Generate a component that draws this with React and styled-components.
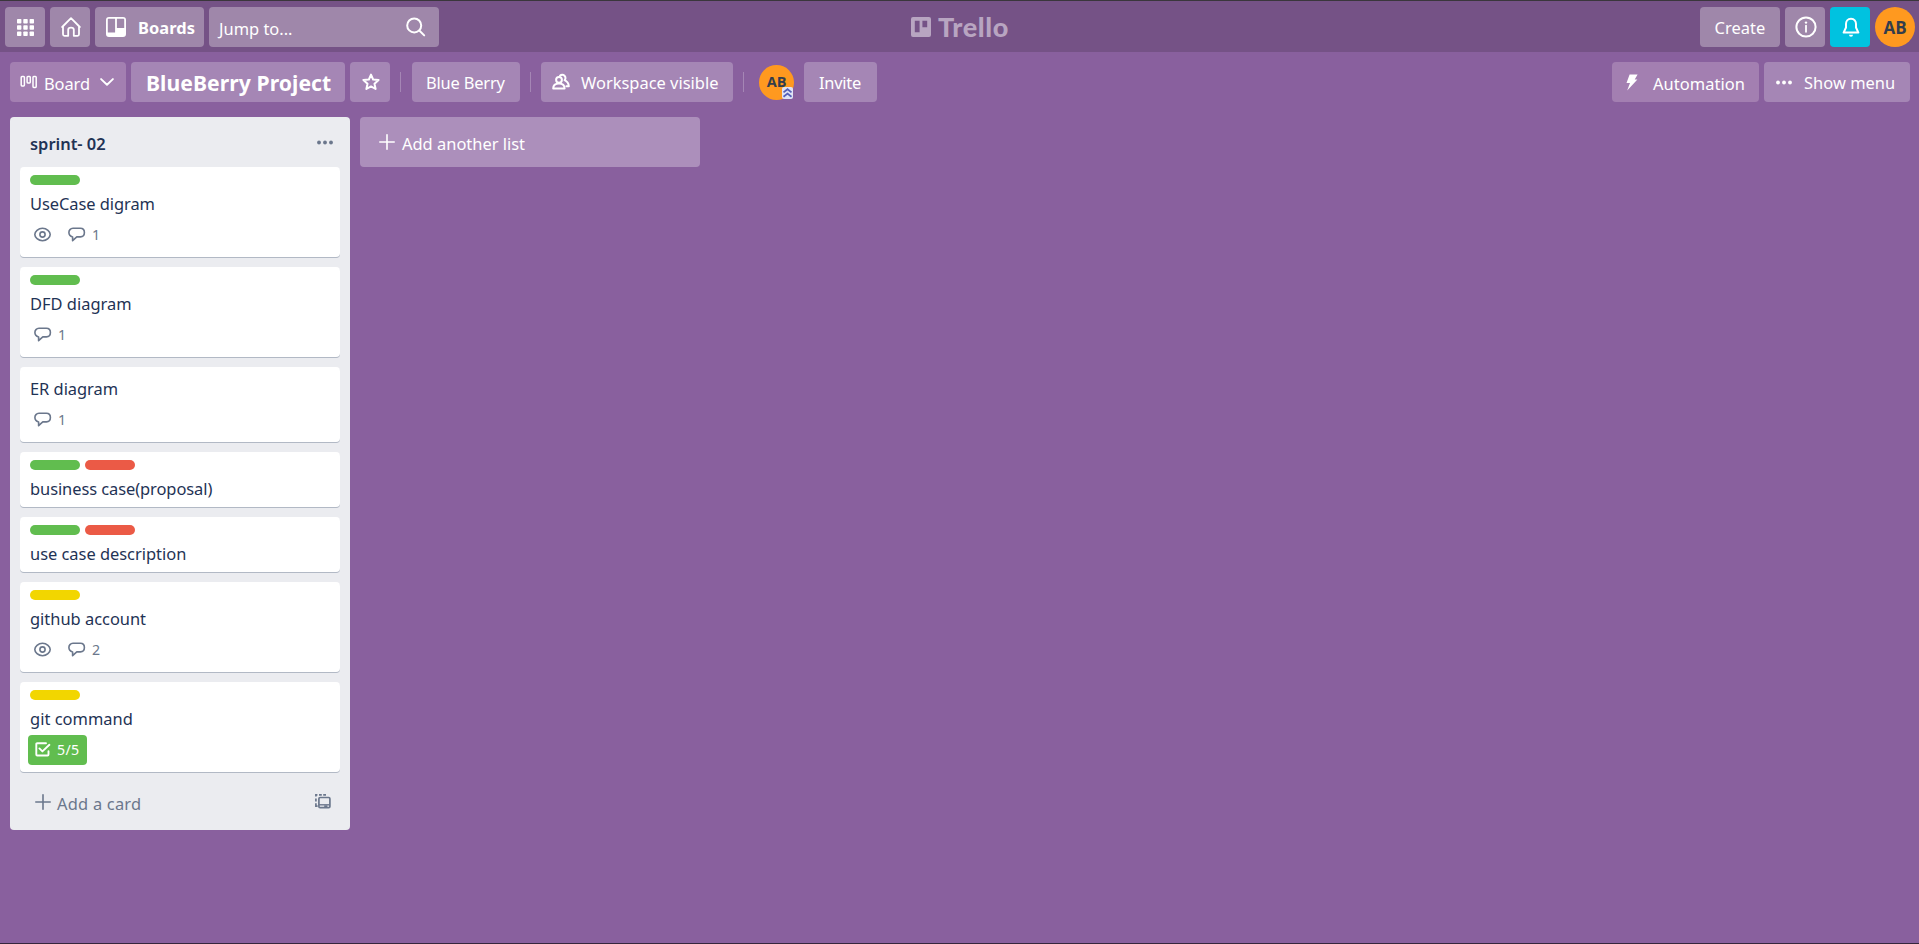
import React from 'react';
import styled, { createGlobalStyle } from 'styled-components';

const Global = createGlobalStyle`
  * { box-sizing: border-box; }
  html, body { margin: 0; padding: 0; }
  body {
    background: #89609e;
    color: #1f3355;
    font-family: "Noto Sans", "Open Sans", sans-serif;
    font-size: 16.45px;
    line-height: 25px;
    overflow: hidden;
  }
  svg { display: block; flex: none; }
`;

const Page = styled.div`
  display: flex;
  flex-direction: column;
  width: 100%;
  height: 944px;
  background: #89609e;
  border-top: 1px solid #3a363c;
  border-bottom: 1px solid #35263c;
`;

const TopBar = styled.header`
  display: flex;
  justify-content: space-between;
  height: 51px;
  flex: none;
  padding: 6px 4px 5px 5px;
  background: #755286;
  color: #fff;
`;

const Group = styled.div`
  display: flex;
  flex: 1 1 0;
  gap: 5px;
  justify-content: ${(p) => (p.$end ? 'flex-end' : 'flex-start')};
`;

const TopButton = styled.div`
  display: flex;
  align-items: center;
  justify-content: ${(p) => (p.$start ? 'flex-start' : 'center')};
  width: ${(p) => p.$w || 40}px;
  height: 40px;
  padding-left: ${(p) => p.$pad || 0}px;
  gap: ${(p) => p.$gap || 0}px;
  border-radius: 4px;
  background: ${(p) => p.$bg || '#9f87aa'};
`;

const Label = styled.span`
  display: block;
  white-space: nowrap;
  padding-top: ${(p) => p.$drop || 0}px;
  font-weight: ${(p) => p.$weight || 400};
  letter-spacing: ${(p) => p.$ls || 0}px;
`;

const SearchBox = styled.div`
  display: flex;
  align-items: center;
  justify-content: space-between;
  width: 230px;
  height: 40px;
  padding: 0 13px 0 10px;
  border-radius: 4px;
  background: #9f87aa;
`;

const Brand = styled.div`
  display: flex;
  align-items: center;
  gap: 7px;
  height: 40px;
  color: #b8a5c1;
`;

const BrandName = styled.span`
  font-family: Lato, "Noto Sans", sans-serif;
  font-size: 27px;
  font-weight: 900;
  letter-spacing: 0.6px;
  line-height: 30px;
  padding-bottom: 1px;
`;

const Avatar = styled.div`
  display: flex;
  align-items: center;
  justify-content: center;
  position: relative;
  width: ${(p) => p.$size}px;
  height: ${(p) => p.$size}px;
  border-radius: 50%;
  background: #ff991f;
  color: #333d4c;
  font-family: "Open Sans", sans-serif;
  font-weight: 700;
  font-size: ${(p) => p.$font}px;
  line-height: 1;
`;

const AdminMark = styled.svg`
  position: absolute;
  right: 1px;
  bottom: 1px;
`;

const BoardBar = styled.div`
  display: flex;
  align-items: center;
  height: 60px;
  flex: none;
  padding: 0 9px 0 10px;
  color: #fff;
`;

const BoardButton = styled.div`
  display: flex;
  align-items: center;
  width: ${(p) => p.$w}px;
  height: 40px;
  padding-left: ${(p) => p.$pad}px;
  gap: ${(p) => p.$gap || 0}px;
  margin-right: ${(p) => (p.$mr === undefined ? 5 : p.$mr)}px;
  border-radius: 4px;
  background: ${(p) => (p.$plain ? '#a37fb1' : '#a586b5')};
`;

const BoardName = styled.h1`
  margin: 0;
  padding-top: 1px;
  font-size: 21.15px;
  line-height: 30px;
  font-weight: 700;
  letter-spacing: 0.06px;
  white-space: nowrap;
`;

const Divider = styled.span`
  width: 1px;
  height: 20px;
  margin-right: ${(p) => p.$mr}px;
  background: #a586b5;
`;

const Spacer = styled.div`
  flex: ${(p) => (p.$w ? `0 0 ${p.$w}px` : '1')};
`;

const Canvas = styled.main`
  display: flex;
  align-items: flex-start;
  gap: 10px;
  padding: 5px 10px;
`;

const List = styled.section`
  width: 340px;
  height: 713px;
  border-radius: 4px;
  background: #ebecf0;
`;

const ListHeader = styled.div`
  display: flex;
  align-items: center;
  justify-content: space-between;
  height: 50px;
  padding: 0 17px 0 20px;
`;

const Cards = styled.div`
  display: flex;
  flex-direction: column;
  gap: 10px;
  padding: 0 10px;
`;

const CardBox = styled.article`
  padding: 8px 10px 7px;
  border-radius: 4px;
  background: #fff;
  box-shadow: 0 1px 0 rgba(9, 30, 66, 0.25);
`;

const Labels = styled.div`
  display: flex;
  gap: 5px;
  padding-bottom: 5px;
`;

const Tag = styled.span`
  width: 50px;
  height: 10px;
  border-radius: 5px;
  background: ${(p) => p.$color};
`;

const CardTitle = styled.div`
  height: 25px;
  white-space: nowrap;
  line-height: 27px;
  letter-spacing: ${(p) => p.$ls}px;
`;

const Badges = styled.div`
  display: flex;
  height: 30px;
  margin-top: 5px;
  color: #6b778c;
`;

const Badge = styled.div`
  display: flex;
  align-items: center;
  gap: 6px;
  height: 30px;
  padding: 0 4px 2px 4px;
  margin-right: 9px;
  font-size: 14.2px;
`;

const DoneBadge = styled(Badge)`
  width: 59px;
  margin-left: -2px;
  padding: 0 7px 1px;
  border-radius: 4px;
  background: #61bd4f;
  color: #fff;
  letter-spacing: 0.3px;
`;

const AddCard = styled.div`
  display: flex;
  align-items: center;
  height: 58px;
  padding: 1px 19px 0 25px;
  color: #6b778c;
`;

const AddList = styled.div`
  display: flex;
  align-items: center;
  width: 340px;
  height: 50px;
  padding-left: 19px;
  gap: 7px;
  border-radius: 4px;
  background: #ac8fbb;
  color: #fff;
`;

const Grid = () => (
  <svg width="17" height="17" viewBox="0 0 17 17" fill="#fff">
    {[0, 6.3, 12.6].map((y) => [0, 6.3, 12.6].map((x) => (
      <rect key={`${x}-${y}`} x={x} y={y} width="4.4" height="4.4" rx="0.7" />
    )))}
  </svg>
);

const Home = () => (
  <svg width="20" height="20" viewBox="0 0 20 20" fill="none" stroke="#fff" strokeWidth="1.8" strokeLinejoin="round" strokeLinecap="round">
    <path d="M1.2 10 10 1.2 18.8 10M2 9.3V17.3Q2 18.8 3.5 18.8H7.2V12.7Q7.2 10.6 10 10.6T12.8 12.7V18.8H16.5Q18 18.8 18 17.3V9.3" />
  </svg>
);

const BoardsIcon = () => (
  <svg width="20" height="20" viewBox="0 0 20 20" fill="#fff">
    <path fillRule="evenodd" d="M3 0H17Q20 0 20 3V17Q20 20 17 20H3Q0 20 0 17V3Q0 0 3 0ZM2.4 1.8Q1.8 1.8 1.8 2.4V15.4H9.1V1.8ZM10.9 1.8V11H18.2V2.4Q18.2 1.8 17.6 1.8Z" />
  </svg>
);

const Search = () => (
  <svg width="20" height="20" viewBox="0 0 20 20" fill="none" stroke="#fff" strokeWidth="2" strokeLinecap="round">
    <circle cx="8.2" cy="8.4" r="7" />
    <path d="M13.3 13.5 18.2 18.4" />
  </svg>
);

const BrandIcon = () => (
  <svg width="20" height="20" viewBox="0 0 20 20" fill="currentColor">
    <path fillRule="evenodd" d="M2 0H18Q20 0 20 2V18Q20 20 18 20H2Q0 20 0 18V2Q0 0 2 0ZM3.8 3.8V15.2H8.6V3.8ZM11.4 3.8V10.2H16.2V3.8Z" />
  </svg>
);

const Info = () => (
  <svg width="22" height="22" viewBox="0 0 22 22" fill="none" stroke="#fff">
    <circle cx="11" cy="11" r="9.6" strokeWidth="2" />
    <path d="M11 9.6V15.8" strokeWidth="1.8" strokeLinecap="round" />
    <circle cx="11" cy="6.6" r="1.2" fill="#fff" stroke="none" />
  </svg>
);

const Bell = () => (
  <svg width="18" height="21" viewBox="0 0 18 21" fill="none" stroke="#fff" strokeWidth="2" strokeLinejoin="round" strokeLinecap="round">
    <path d="M9 1.8C5.7 1.8 4 4.2 4 7V10.5L1.6 15.6H16.4L14 10.5V7C14 4.2 12.3 1.8 9 1.8Z" />
    <path d="M7 17.8A2 2 0 0 0 11 17.8Z" fill="#fff" stroke="none" />
  </svg>
);

const BoardView = () => (
  <svg width="18" height="14" viewBox="0 0 18 14" fill="none" stroke="#fff" strokeWidth="1.5">
    <rect x="1.2" y="1.5" width="3.2" height="9.4" rx="0.8" />
    <rect x="7.1" y="1.5" width="3.2" height="6.4" rx="0.8" />
    <rect x="13" y="1.5" width="3.2" height="10.9" rx="0.8" />
  </svg>
);

const Chevron = () => (
  <svg width="14" height="8" viewBox="0 0 14 8" fill="none" stroke="#fff" strokeWidth="1.9" strokeLinecap="round" strokeLinejoin="round">
    <path d="M1.1 1.1 7 6.8 12.9 1.1" />
  </svg>
);

const Star = () => (
  <svg width="18" height="18" viewBox="0 0 18 18" fill="none" stroke="#fff" strokeWidth="2" strokeLinejoin="round">
    <path d="M9 1.6 11.1 6.5 16.6 7 12.5 10.7 13.6 16 9 13.4 4.4 16 5.5 10.7 1.4 7 6.9 6.5Z" />
  </svg>
);

const People = () => (
  <svg width="18" height="18" viewBox="0 0 18 18" fill="none" stroke="#fff" strokeWidth="2" strokeLinecap="round" strokeLinejoin="round">
    <circle cx="7" cy="6.8" r="2.9" />
    <path d="M1.2 15.6C1.2 12 3.6 10.6 7 10.6S12.6 12 12.6 15.6Z" />
    <path d="M8 2.8A3 3 0 1 1 12.6 7.2C15.2 8.4 16.6 10.4 16.8 13.2H14.4" />
  </svg>
);

const Bolt = () => (
  <svg width="12" height="17" viewBox="0 0 12 17" fill="#fff">
    <path d="M3.6 0.4H11.6L8.7 5.5H11.4L1.2 16.4 4 8.9H0.5Z" />
  </svg>
);

const Dots = ({ color }) => (
  <svg width="16" height="5" viewBox="0 0 16 5" fill={color}>
    <circle cx="2" cy="2.5" r="1.9" />
    <circle cx="8" cy="2.5" r="1.9" />
    <circle cx="14" cy="2.5" r="1.9" />
  </svg>
);

const Plus = ({ color }) => (
  <svg width="16" height="16" viewBox="0 0 16 16" fill="none" stroke={color} strokeWidth="1.6" strokeLinecap="round">
    <path d="M8 0.8V15.2M0.8 8H15.2" />
  </svg>
);

const Eye = () => (
  <svg width="17" height="15" viewBox="0 0 17 15" fill="none" stroke="currentColor" strokeWidth="1.6">
    <path d="M8.5 1.3C12.8 1.3 16.2 4.6 16.2 7.5S12.8 13.7 8.5 13.7.8 10.4.8 7.5 4.2 1.3 8.5 1.3Z" />
    <circle cx="8.5" cy="7.5" r="2.6" />
  </svg>
);

const Comment = () => (
  <svg width="18" height="15" viewBox="0 0 18 15" fill="none" stroke="currentColor" strokeWidth="1.6" strokeLinejoin="round">
    <path d="M5 1.3H12.4C15 1.3 16.4 3.2 16.4 5.6S15 9.9 12.4 9.9H8.8L4.6 13.7V10C2.2 9.4 0.9 7.8 0.9 5.6S2.4 1.3 5 1.3Z" />
  </svg>
);

const Check = () => (
  <svg width="16" height="15" viewBox="0 0 16 15" fill="none" stroke="#fff" strokeWidth="1.9" strokeLinecap="round" strokeLinejoin="round">
    <path d="M11 1.2H2.2Q1.3 1.2 1.3 2.1V12.6Q1.3 13.5 2.2 13.5H12.6Q13.5 13.5 13.5 12.6V9.2" />
    <path d="M4.4 6.4 7.4 9.4 14.4 2.8" />
  </svg>
);

const Template = () => (
  <svg width="16" height="15" viewBox="0 0 16 15" fill="none" stroke="currentColor" strokeWidth="1.7">
    <rect x="3.9" y="3.5" width="11" height="10.2" rx="1.2" />
    <path d="M3.9 10.8H14.9" strokeWidth="1.4" />
    <path d="M9.2 12.2H12.4" strokeWidth="1.8" />
    <path d="M2.4 0.9H0.9V2.6M0.9 4.4V7.4M0.9 9.2V12.2H2.6M4 0.9H6.8M8.2 0.9H11" />
  </svg>
);

const GREEN = '#61bd4f';
const RED = '#eb5a46';
const YELLOW = '#f2d600';

const cards = [
  { title: 'UseCase digram', ls: -0.06, tags: [GREEN], watch: true, comments: 1 },
  { title: 'DFD diagram', ls: 0, tags: [GREEN], comments: 1 },
  { title: 'ER diagram', ls: -0.03, tags: [], comments: 1 },
  { title: 'business case(proposal)', ls: -0.07, tags: [GREEN, RED] },
  { title: 'use case description', ls: -0.02, tags: [GREEN, RED] },
  { title: 'github account', ls: -0.01, tags: [YELLOW], watch: true, comments: 2 },
  { title: 'git command', ls: 0.03, tags: [YELLOW], checklist: '5/5' },
];

const Card = ({ card }) => (
  <CardBox>
    {card.tags.length > 0 && (
      <Labels>{card.tags.map((c) => <Tag key={c} $color={c} />)}</Labels>
    )}
    <CardTitle $ls={card.ls}>{card.title}</CardTitle>
    {(card.watch || card.comments || card.checklist) && (
      <Badges>
        {card.watch && <Badge><Eye /></Badge>}
        {card.comments && <Badge><Comment /><span>{card.comments}</span></Badge>}
        {card.checklist && <DoneBadge><Check /><span>{card.checklist}</span></DoneBadge>}
      </Badges>
    )}
  </CardBox>
);

export default function App() {
  return (
    <Page>
      <Global />
      <TopBar>
        <Group>
          <TopButton><Grid /></TopButton>
          <TopButton $pad={1}><Home /></TopButton>
          <TopButton $w={109} $start $pad={11} $gap={12}>
            <BoardsIcon />
            <Label $weight={700} $ls={0.05}>Boards</Label>
          </TopButton>
          <SearchBox>
            <Label $drop={2}>Jump to...</Label>
            <Search />
          </SearchBox>
        </Group>
        <Brand>
          <BrandIcon />
          <BrandName>Trello</BrandName>
        </Brand>
        <Group $end>
          <TopButton $w={80}><Label $ls={0.05}>Create</Label></TopButton>
          <TopButton $pad={1}><Info /></TopButton>
          <TopButton $pad={1} $bg="#00c2e0"><Bell /></TopButton>
          <Avatar $size={40} $font={17}>AB</Avatar>
        </Group>
      </TopBar>
      <BoardBar>
        <BoardButton $plain $w={116} $pad={10}>
          <BoardView />
          <Spacer $w={6} />
          <Label $drop={2} $ls={-0.08}>Board</Label>
          <Spacer $w={10} />
          <Chevron />
        </BoardButton>
        <BoardButton $w={214} $pad={15}><BoardName>BlueBerry Project</BoardName></BoardButton>
        <BoardButton $w={40} $pad={12} $mr={10}><Star /></BoardButton>
        <Divider $mr={11} />
        <BoardButton $w={108} $pad={14} $mr={10}><Label $ls={-0.18}>Blue Berry</Label></BoardButton>
        <Divider $mr={10} />
        <BoardButton $w={192} $pad={11} $gap={11} $mr={10}>
          <People />
          <Label>Workspace visible</Label>
        </BoardButton>
        <Divider $mr={15} />
        <Avatar $size={35} $font={14.5}>
          AB
          <AdminMark width="11" height="12" viewBox="0 0 11 12">
            <rect width="11" height="12" rx="2" fill="#dfe3f5" />
            <path d="M1.5 5.4 5.5 2.2 9.5 5.4M1.5 9.8 5.5 6.6 9.5 9.8" fill="none" stroke="#5560b8" strokeWidth="1.8" />
          </AdminMark>
        </Avatar>
        <Spacer $w={10} />
        <BoardButton $w={73} $pad={15}><Label $ls={-0.25}>Invite</Label></BoardButton>
        <Spacer />
        <BoardButton $plain $w={147} $pad={14} $gap={15}>
          <Bolt />
          <Label $drop={2} $ls={0.05}>Automation</Label>
        </BoardButton>
        <BoardButton $w={146} $pad={12} $gap={12} $mr={0}>
          <Dots color="#fff" />
          <Label $ls={0.03}>Show menu</Label>
        </BoardButton>
      </BoardBar>
      <Canvas>
        <List>
          <ListHeader>
            <Label $weight={600} $drop={2}>sprint- 02</Label>
            <Dots color="#6b778c" />
          </ListHeader>
          <Cards>{cards.map((c) => <Card key={c.title} card={c} />)}</Cards>
          <AddCard>
            <Plus color="#6b778c" />
            <Spacer $w={6} />
            <Label $ls={0.22} $drop={3}>Add a card</Label>
            <Spacer />
            <Template />
          </AddCard>
        </List>
        <AddList>
          <Plus color="#fff" />
          <Label $drop={2}>Add another list</Label>
        </AddList>
      </Canvas>
    </Page>
  );
}
